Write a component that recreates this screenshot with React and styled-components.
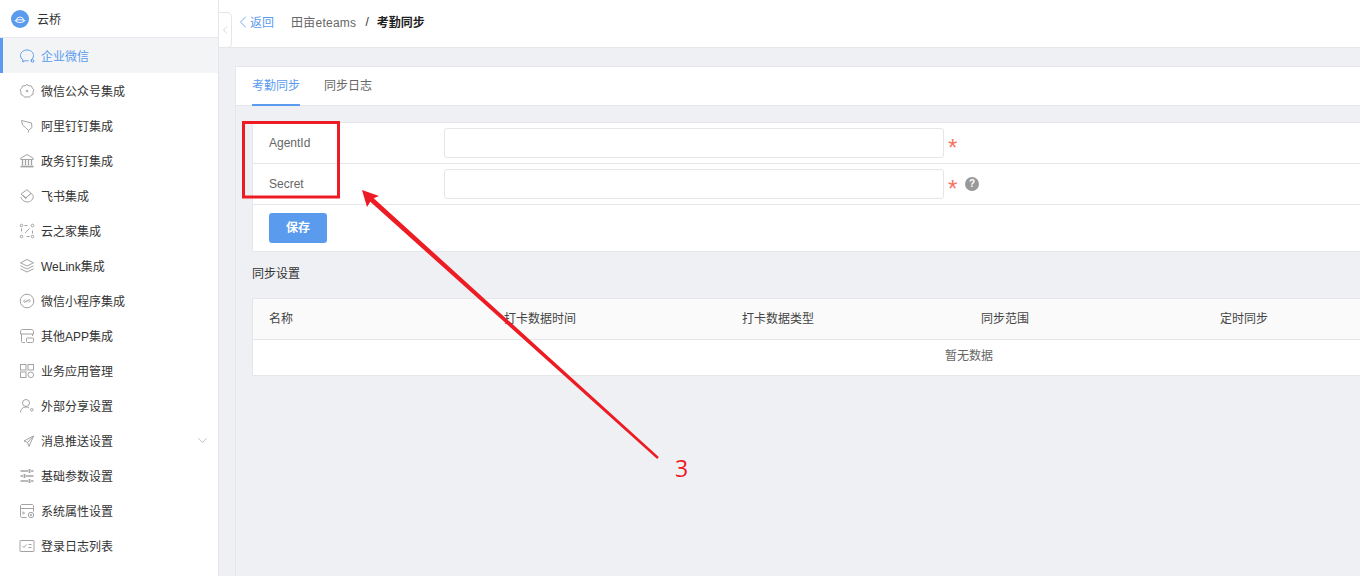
import React from "react"
import styled, { createGlobalStyle } from "styled-components"
import { ChevronDown, ChevronLeft } from "lucide-react"

const Global = createGlobalStyle`
    html, body { margin: 0; padding: 0; height: 100%; }
    body {
        font-family: "Liberation Sans", "Noto Sans CJK SC", sans-serif;
        font-size: 12px;
        overflow: hidden;
    }
`

const icons = {
    chat: <>
        <path d="M11.500 12.200c2-1 3-2.700 3-4.700C14.500 4.300 11.600 2 8 2S1.500 4.300 1.500 7.500c0 1.900 1 3.500 2.600 4.500l-.4 2 2.500-1.300c.9.200 2.300.3 3.300.1" />
        <circle cx="13.600" cy="13" r="1.300" />
    </>,
    badge: <>
        <path d="M8 1.500l2 1.300 2.400.1.900 2.200 1.500 1.700-.8 2.300.1 2.300-2.200 1-1.500 1.900L8 13.700l-2.400.6-1.500-1.900-2.200-1 .1-2.300-.8-2.300 1.500-1.700.9-2.200L6 2.800z" />
        <circle cx="8" cy="8" r=".9" />
    </>,
    tag: <>
        <path d="M2.500 2.500l10 2.500.5 4.500-3.500 3-3-3-3-2.500z" />
        <path d="M9.500 12.500l-.3 2" />
    </>,
    bank: <>
        <path d="M8 1.500L1.800 5.200v1.300h12.400V5.200z" />
        <path d="M3.500 7v5M6.500 7v5M9.500 7v5M12.500 7v5" strokeWidth="1.300" />
        <path d="M1.500 13.500h13" strokeWidth="1.800" />
    </>,
    feishu: <>
        <path d="M2 6l6-4.300 4 3.600-5.500 5z" />
        <path d="M6.500 10.300L12 5.300l2.300 2.200c.3 3.700-2.700 6.800-6.300 6.500-3-.2-5.300-2.300-6.300-5.100" />
        <path d="M4 7.200l3.500 3.200" />
    </>,
    dots: <>
        <circle cx="2.500" cy="2.500" r="1.300" />
        <circle cx="13.500" cy="2.500" r="1.300" />
        <circle cx="2.500" cy="13.500" r="1.300" />
        <circle cx="13.500" cy="13.500" r="1.300" />
        <path d="M5.500 2.500h3M2.500 5.500v3M13.500 7.500v3M7.500 13.500h3M10.500 5.500L6 10" />
    </>,
    layers: <>
        <path d="M8 1.500l6.500 3.300L8 8 1.500 4.800z" />
        <path d="M1.500 7.800L8 11l6.500-3.200" />
        <path d="M1.500 10.800L8 14l6.500-3.200" />
    </>,
    link: <>
        <circle cx="8" cy="8" r="6.800" />
        <path d="M7 9.500L9.500 7c.8-.8 2-.1 1.700 1L10 9.500M9 6.500L6.500 9c-.8.800-2 .1-1.700-1L6 6.500" />
    </>,
    app: <>
        <path d="M1.500 6V3.500c0-1.100.9-2 2-2h9c1.100 0 2 .9 2 2V6zM2.500 6v7.500c0 .5.400 1 1 1h2.500M13.500 6v2" />
        <rect x="7.500" y="10" width="7" height="4.500" rx="1" />
    </>,
    grid: <>
        <rect x="1.500" y="1.500" width="5.500" height="5.500" />
        <rect x="9" y="1.500" width="5.500" height="5.500" />
        <rect x="1.500" y="9" width="5.500" height="5.500" />
        <circle cx="11.800" cy="11.800" r="2.800" />
    </>,
    user: <>
        <circle cx="7" cy="5" r="3.500" />
        <path d="M1.500 14.500c0-3.200 2.300-5.500 5.500-5.500 1.100 0 2.100.3 3 .8" />
        <circle cx="12.800" cy="11.800" r="1.300" />
    </>,
    plane: <>
        <path d="M14.500 3L5 8l3.500 1.500L10 13.500z" />
        <path d="M8.500 9.500l6-6.500" />
    </>,
    sliders: <>
        <path d="M1.500 3h7.500M12 3h2.500M1.500 8h2.500M7 8h7.500M1.500 13h7.500M12 13h2.500" strokeWidth="1.500" />
        <path d="M10.500 1v4M5.500 6v4M10.500 11v4" strokeWidth="1.800" />
    </>,
    system: <>
        <path d="M7.500 14.500H3c-.8 0-1.500-.7-1.500-1.500V3c0-.8.700-1.500 1.500-1.500h10c.8 0 1.500.7 1.500 1.500v5.500M1.500 5.500h13" />
        <circle cx="12" cy="12" r="2.700" />
        <circle cx="12" cy="12" r=".8" />
        <path d="M4 8.500v3M6 10h-2" />
    </>,
    log: <>
        <rect x="1" y="2.500" width="14" height="11" rx=".5" />
        <path d="M3.500 8l1.500 1.500 2.500-3M9.500 6.500h3M9.500 9.500h3" />
    </>,
}

const menu = [
    { label: "企业微信", icon: "chat", active: true },
    { label: "微信公众号集成", icon: "badge" },
    { label: "阿里钉钉集成", icon: "tag" },
    { label: "政务钉钉集成", icon: "bank" },
    { label: "飞书集成", icon: "feishu" },
    { label: "云之家集成", icon: "dots" },
    { label: "WeLink集成", icon: "layers" },
    { label: "微信小程序集成", icon: "link" },
    { label: "其他APP集成", icon: "app" },
    { label: "业务应用管理", icon: "grid" },
    { label: "外部分享设置", icon: "user" },
    { label: "消息推送设置", icon: "plane", more: true },
    { label: "基础参数设置", icon: "sliders" },
    { label: "系统属性设置", icon: "system" },
    { label: "登录日志列表", icon: "log" },
]

const columns = ["名称", "打卡数据时间", "打卡数据类型", "同步范围", "定时同步"]

export default function App() {
    return (
        <Page>
            <Global />
            <Sidebar>
                <Brand>
                    <BrandLogo>
                        <svg width="12" height="12" viewBox="0 0 12 12" fill="none" stroke="#fff" strokeWidth="1">
                            <path d="M2.500 7.500a3.500 3.500 0 0 1 7 0" />
                            <path d="M1 7.500c1.500 2.500 8.500 2.500 10 0-2-1-8-1-10 0z" />
                        </svg>
                    </BrandLogo>
                    云桥
                </Brand>
                {menu.map(({ label, icon, active, more }) => (
                    <MenuItem key={label} $active={active}>
                        <MenuIcon viewBox="0 0 16 16">{icons[icon]}</MenuIcon>
                        <span>{label}</span>
                        {more && <More><ChevronDown size={15} strokeWidth={1} /></More>}
                    </MenuItem>
                ))}
            </Sidebar>
            <Main>
                <Header>
                    <Collapse><ChevronLeft size={14} strokeWidth={1} /></Collapse>
                    <Back><ChevronLeft size={20} strokeWidth={1} />返回</Back>
                    <Crumb>田亩eteams</Crumb>
                    <Slash>/</Slash>
                    <Current>考勤同步</Current>
                </Header>
                <Content>
                    <Panel>
                        <Tabs>
                            <Tab $active>考勤同步</Tab>
                            <Tab>同步日志</Tab>
                        </Tabs>
                        <Body>
                            <FormCard>
                                <FormRow>
                                    <FormLabel>AgentId</FormLabel>
                                    <Input />
                                    <Star>*</Star>
                                </FormRow>
                                <FormRow>
                                    <FormLabel>Secret</FormLabel>
                                    <Input />
                                    <Star>*</Star>
                                    <Help>?</Help>
                                </FormRow>
                                <SaveRow><SaveButton>保存</SaveButton></SaveRow>
                            </FormCard>
                            <SectionTitle>同步设置</SectionTitle>
                            <Table>
                                <TableHead>
                                    {columns.map(c => <HeadCell key={c}>{c}</HeadCell>)}
                                </TableHead>
                                <Empty>暂无数据</Empty>
                            </Table>
                        </Body>
                    </Panel>
                </Content>
            </Main>
            <Annotation viewBox="0 0 1360 576" width="1360" height="576">
                <rect x="243.500" y="122.500" width="95" height="74.500" fill="none" stroke="#ed1c24" strokeWidth="3" />
                <polygon points="362,190 379,196 373.700,198.200 658.800,457 657.200,459 370.300,201.800 367,207" fill="#ed1c24" />
            </Annotation>
            <Mark>3</Mark>
        </Page>
    )
}

const Page = styled.div`
    position: relative;
    display: flex;
    width: 1360px;
    height: 576px;
    overflow: hidden;
    background-color: #eff0f4;
`
const Sidebar = styled.aside`
    width: 218px;
    flex-shrink: 0;
    background-color: #fff;
    border-right: 1px solid #e5e6ea;
`
const Brand = styled.div`
    display: flex;
    align-items: center;
    gap: 8px;
    height: 37px;
    padding-left: 11px;
    color: #333;
    border-bottom: 1px solid #e8e9ec;
`
const BrandLogo = styled.div`
    display: flex;
    align-items: center;
    justify-content: center;
    width: 18px;
    height: 18px;
    border-radius: 50%;
    background-color: #5b9bed;
`
const MenuItem = styled.div`
    display: flex;
    align-items: center;
    gap: 6px;
    height: 35px;
    padding-left: ${props => props.$active ? "16px" : "19px"};
    color: ${props => props.$active ? "#5b9bed" : "#333"};
    background-color: ${props => props.$active ? "#f3f4f6" : "transparent"};
    border-left: ${props => props.$active ? "3px solid #5b9bed" : "none"};
    svg { color: ${props => props.$active ? "#5b9bed" : "#a3a3a3"}; }
`
const MenuIcon = styled.svg`
    width: 16px;
    height: 16px;
    flex-shrink: 0;
    fill: none;
    stroke: currentColor;
    stroke-width: 1;
`
const More = styled.span`
    margin-left: auto;
    margin-right: 8px;
    display: flex;
    svg { color: #999; }
`
const Main = styled.div`
    flex: 1;
    min-width: 0;
    display: flex;
    flex-direction: column;
`
const Header = styled.header`
    position: relative;
    display: flex;
    align-items: center;
    height: 48px;
    padding: 0 0 4px 14px;
    box-sizing: border-box;
    background-color: #fff;
    border-bottom: 1px solid #e5e6ea;
`
const Collapse = styled.div`
    position: absolute;
    left: 0;
    top: 12px;
    width: 13px;
    height: 36px;
    display: flex;
    align-items: center;
    justify-content: center;
    box-sizing: border-box;
    background-color: #fff;
    border: 1px solid #e5e6ea;
    border-left: none;
    border-radius: 0 5px 5px 0;
    color: #aaa;
`
const Back = styled.div`
    display: flex;
    align-items: center;
    color: #5b9bed;
    margin-right: 17px;
    svg { margin-right: -3px; }
`
const Crumb = styled.span`
    color: #666;
    letter-spacing: 0.25px;
`
const Slash = styled.span`
    margin: 0 8px 0 9px;
    color: #333;
`
const Current = styled.span`
    color: #222;
    font-weight: bold;
`
const Content = styled.div`
    flex: 1;
    padding: 18px 0 0 16px;
    min-height: 0;
`
const Panel = styled.div`
    height: 100%;
    border-left: 1px solid #e5e6ea;
    border-top: 1px solid #e5e6ea;
`
const Tabs = styled.div`
    display: flex;
    gap: 24px;
    height: 39px;
    padding-left: 16px;
    box-sizing: border-box;
    background-color: #fff;
    border-bottom: 1px solid #e5e6ea;
`
const Tab = styled.div`
    height: 39px;
    box-sizing: border-box;
    line-height: 39px;
    color: ${props => props.$active ? "#5b9bed" : "#666"};
    border-bottom: ${props => props.$active ? "2px solid #5b9bed" : "none"};
`
const Body = styled.div`
    padding: 16px 0 0 16px;
`
const FormCard = styled.div`
    background-color: #fff;
    border: 1px solid #e5e6ea;
    border-right: none;
`
const FormRow = styled.div`
    display: flex;
    align-items: center;
    height: 40px;
    padding-left: 16px;
    border-bottom: 1px solid #e5e6ea;
`
const FormLabel = styled.div`
    width: 175px;
    color: #666;
`
const Input = styled.input`
    width: 500px;
    height: 30px;
    padding: 0;
    box-sizing: border-box;
    border: 1px solid #e5e6ea;
    border-radius: 3px;
    background-color: #fff;
`
const Star = styled.span`
    margin-left: 4px;
    width: 10px;
    height: 14px;
    color: #f5735f;
    font-size: 24px;
    line-height: 24px;
    font-family: "Liberation Sans", sans-serif;
`
const Help = styled.span`
    margin-left: 7px;
    width: 14px;
    height: 14px;
    border-radius: 50%;
    background-color: #999;
    color: #fff;
    font-size: 10px;
    font-weight: bold;
    line-height: 14px;
    text-align: center;
`
const SaveRow = styled.div`
    height: 46px;
    padding: 8px 16px 0;
    box-sizing: border-box;
`
const SaveButton = styled.button`
    display: block;
    width: 58px;
    height: 30px;
    padding: 0 0 3px;
    border: none;
    border-radius: 3px;
    color: #fff;
    font: inherit;
    font-weight: bold;
    background-color: #5b9bed;
`
const SectionTitle = styled.div`
    height: 46px;
    line-height: 45px;
    color: #333;
`
const Table = styled.div`
    background-color: #fff;
    border: 1px solid #e5e6ea;
    border-right: none;
`
const TableHead = styled.div`
    display: grid;
    grid-template-columns: 235px 238px 239px 239px 1fr;
    align-items: center;
    height: 41px;
    padding: 0 0 4px 16px;
    box-sizing: border-box;
    background-color: #fafafa;
    border-bottom: 1px solid #e5e6ea;
`
const HeadCell = styled.div`
    color: #444;
`
const Empty = styled.div`
    height: 35px;
    line-height: 33px;
    padding-left: 692px;
    color: #666;
`
const Annotation = styled.svg`
    position: absolute;
    left: 0;
    top: 0;
    pointer-events: none;
`
const Mark = styled.div`
    position: absolute;
    left: 675px;
    top: 452px;
    color: #ed1c24;
    font-size: 23px;
    line-height: 32px;
    font-family: "Open Sans", sans-serif;
`
